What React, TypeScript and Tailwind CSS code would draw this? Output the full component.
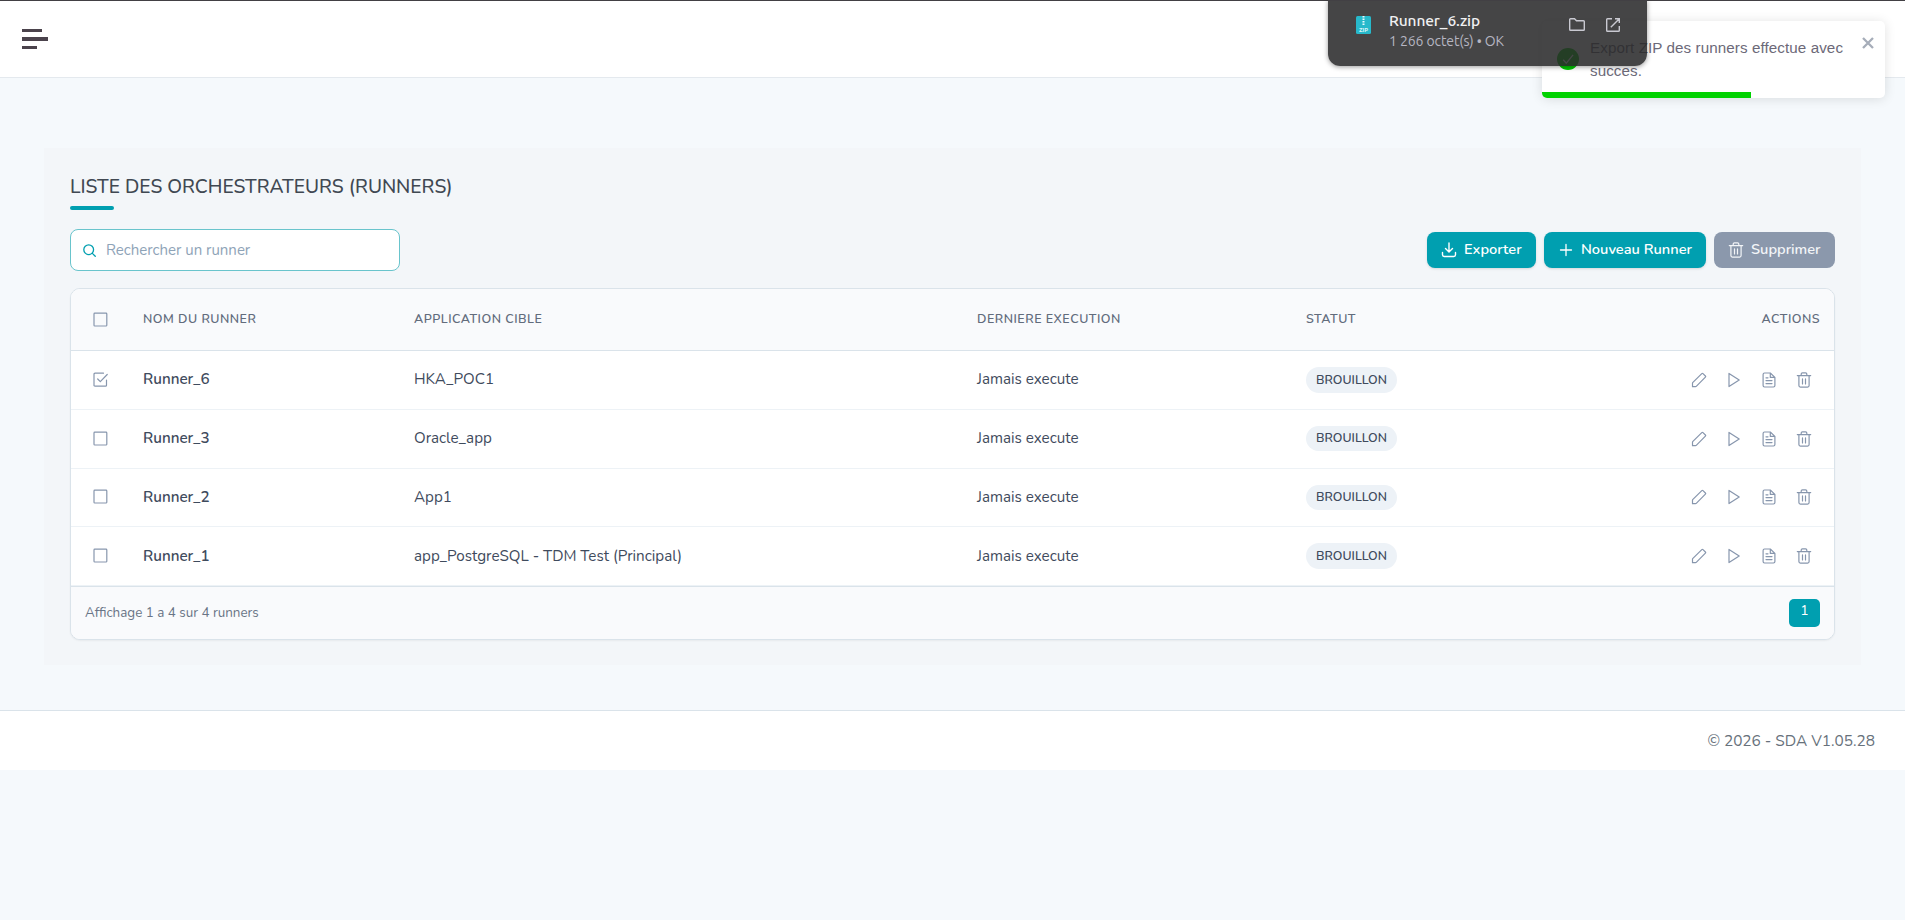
import clsx from "clsx";
import type { ReactNode } from "react";

const COLUMNS = "grid grid-cols-[72px_271px_563px_329px_1fr] items-center";

const runners = [
  { name: "Runner_6", app: "HKA_POC1", checked: true },
  { name: "Runner_3", app: "Oracle_app", checked: false },
  { name: "Runner_2", app: "App1", checked: false },
  { name: "Runner_1", app: "app_PostgreSQL - TDM Test (Principal)", checked: false },
];

function Icon({ children, className }: { children: ReactNode; className?: string }) {
  return (
    <svg
      viewBox="0 0 16 16"
      fill="none"
      stroke="currentColor"
      strokeWidth="1.2"
      strokeLinecap="round"
      strokeLinejoin="round"
      className={clsx("shrink-0", className ?? "size-4")}
    >
      {children}
    </svg>
  );
}

function TrashIcon() {
  return (
    <Icon>
      <path d="M1.3 3.6h13.4M5.2 3.4V2q0-1.2 1.2-1.2h3.2q1.2 0 1.2 1.2v1.4M2.9 3.8v9.8q0 1.5 1.5 1.5h7.2q1.5 0 1.5-1.5V3.8M6.5 6.9v5M9.5 6.9v5" />
    </Icon>
  );
}

function PencilIcon() {
  return (
    <Icon>
      <path d="M1.5 14.7v-3.4q0-.5.4-.9l8.9-8.8q.6-.6 1.2 0l2.4 2.4q.6.6 0 1.2l-8.9 8.9q-.5.6-1 .6Z" />
    </Icon>
  );
}

function PlayIcon() {
  return (
    <Icon>
      <path d="M3 1.4v13.2L13.2 8Z" />
    </Icon>
  );
}

function FileIcon() {
  return (
    <Icon>
      <path d="M9.3 1H3.5Q2.1 1 2.1 2.4v11.2Q2.1 15 3.5 15h9q1.4 0 1.4-1.4V5.4ZM9.3 1v4.4h4.6M5 5.8h2M5 8.6h6M5 11.6h6" />
    </Icon>
  );
}

function Checkbox({ checked }: { checked?: boolean }) {
  return (
    <Icon className="size-4 text-[#8796ad]">
      {checked ? (
        <path d="M14.5 8v5.2q0 1-1 1H3q-1 0-1-1v-11q0-1 1-1h8.5M5.7 7l2.6 2.7 6.9-7.2" />
      ) : (
        <rect x="2" y="1.2" width="12.8" height="12.8" rx="0.8" />
      )}
    </Icon>
  );
}

function Toast() {
  return (
    <div className="absolute top-[21px] right-5 h-[77px] w-[343px] overflow-hidden rounded-[5px] bg-white shadow-[0_1px_12px_rgba(0,0,0,0.12)]">
      <div className="flex pt-[15px] pl-[15px]">
        <svg viewBox="0 0 22 22" className="mt-3 size-[22px]">
          <circle cx="11" cy="11" r="11" fill="#00c800" />
          <path d="m6.2 11.7 3.1 3.5 6.8-8.3" fill="none" stroke="#fff" strokeWidth="1.3" />
        </svg>
        <p className="ml-[11px] w-[270px] font-['Liberation_Sans',sans-serif] text-[15.2px] leading-[23px] tracking-[0.08px] text-[#6c6978]">
          Export ZIP des runners effectue avec succes.
        </p>
      </div>
      <svg viewBox="0 0 12 12" className="absolute top-4 right-[11px] size-3">
        <path d="m1 1 10 10M11 1 1 11" stroke="#a6adb9" strokeWidth="2.3" />
      </svg>
      <div className="absolute bottom-0 left-0 h-1.5 w-[209px] bg-[#00d200]" />
    </div>
  );
}

function DownloadPopup() {
  return (
    <div className="absolute top-0 left-[1328px] flex h-[66px] w-[319px] rounded-b-xl border-t border-[#424044] bg-[rgba(41,41,43,0.87)] font-[Ubuntu,'Noto_Sans',sans-serif] shadow-[0_1px_5px_rgba(0,0,0,0.4)]">
      <svg viewBox="0 0 15 18" className="mt-[15px] ml-7 h-[18px] w-[15px]">
        <rect width="15" height="18" rx="1.5" fill="#27b9cb" />
        <path d="M7.5 0v9" stroke="#e8fbfd" strokeWidth="2" strokeDasharray="1.5 1" />
        <text x="7.5" y="15.5" textAnchor="middle" fontSize="6" fontWeight="700" fill="#d9f6fa">
          ZIP
        </text>
      </svg>
      <div className="mt-2.5 ml-[18px] w-[180px] whitespace-nowrap">
        <div className="text-[15.5px] leading-5 font-medium tracking-[-0.1px] text-[#f0f0f2]">Runner_6.zip</div>
        <div className="text-[14px] leading-5 tracking-[-0.1px] text-[#b6b6c2]">1 266 octet(s) • OK</div>
      </div>
      <svg viewBox="0 0 16 14" className="mt-[17px] h-[14px] w-4" fill="none" stroke="#c9c9d1" strokeWidth="1.4">
        <path d="M.7 11.5v-10q0-.8.8-.8h4l2 2h7q.8 0 .8.8v8q0 .8-.8.8h-13q-.8 0-.8-.8Z" />
      </svg>
      <svg viewBox="0 0 14 14" className="mt-[17px] ml-[21px] size-[14px]" fill="none" stroke="#c9c9d1" strokeWidth="1.4">
        <path d="M6 .7H1.5Q.7.7.7 1.5v11q0 .8.8.8h11q.8 0 .8-.8V8M9 .7h4.3V5M13.3.7 4.8 9.2" />
      </svg>
    </div>
  );
}

function Toolbar() {
  return (
    <div className="mt-[19px] flex h-[42px] items-center justify-between">
      <label className="flex h-[42px] w-[330px] items-center rounded-lg border border-[#69c4cc] bg-white pl-3">
        <Icon className="size-[13px] text-[#009fb0]">
          <circle cx="7" cy="7" r="6" strokeWidth="1.6" />
          <path d="m11.5 11.5 3.6 3.6" strokeWidth="1.6" />
        </Icon>
        <input
          placeholder="Rechercher un runner"
          className="ml-2.5 w-[280px] text-[15px] outline-none placeholder:text-[#8ea3b7]"
        />
      </label>
      <div className="flex gap-2 text-[14.6px] font-semibold text-white">
        <button className="flex h-9 w-[109px] items-center rounded-lg bg-[#009fb0] pl-3.5 shadow-sm">
          <Icon>
            <path d="M8 1v8.5M4.5 6.5 8 10l3.5-3.5M1.5 10.5v2.3q0 1.7 1.7 1.7h9.6q1.7 0 1.7-1.7v-2.3" strokeWidth="1.4" />
          </Icon>
          <span className="ml-[7px]">Exporter</span>
        </button>
        <button className="flex h-9 w-[162px] items-center rounded-lg bg-[#009fb0] pl-3.5 shadow-sm">
          <Icon>
            <path d="M8 2.5v11M2.5 8h11" strokeWidth="1.3" />
          </Icon>
          <span className="ml-[7px]">Nouveau Runner</span>
        </button>
        <button className="flex h-9 w-[121px] items-center rounded-lg bg-[#8b98ac] pl-3.5 text-[#f3f5f8]">
          <TrashIcon />
          <span className="ml-[7px]">Supprimer</span>
        </button>
      </div>
    </div>
  );
}

function RunnersTable() {
  return (
    <div className="mt-[17px] overflow-hidden rounded-[10px] border border-[#dae3ea] bg-white text-[#3f4b5d] shadow-xs">
      <div
        className={clsx(
          COLUMNS,
          "h-[62px] border-b border-[#dae3ea] bg-[#f9fafc] text-[12.5px] font-semibold tracking-[0.5px] text-[#626c7c]"
        )}
      >
        <div className="pl-[21px]">
          <Checkbox />
        </div>
        <div>NOM DU RUNNER</div>
        <div>APPLICATION CIBLE</div>
        <div>DERNIERE EXECUTION</div>
        <div className="flex justify-between pr-3.5">
          <span>STATUT</span>
          <span>ACTIONS</span>
        </div>
      </div>
      {runners.map((runner) => (
        <div key={runner.name} className={clsx(COLUMNS, "h-[58.75px] border-b border-[#edf2f6] text-[15.2px]")}>
          <div className="pl-[21px]">
            <Checkbox checked={runner.checked} />
          </div>
          <div className="font-semibold">{runner.name}</div>
          <div>{runner.app}</div>
          <div>Jamais execute</div>
          <div className="flex items-center justify-between pr-[22px]">
            <span className="flex h-[25.5px] w-[91px] items-center justify-center rounded-full bg-[#edf2f7] text-[12.4px] font-semibold">
              BROUILLON
            </span>
            <div className="flex gap-[19px] text-[#8796ad]">
              <PencilIcon />
              <PlayIcon />
              <FileIcon />
              <TrashIcon />
            </div>
          </div>
        </div>
      ))}
      <div className="flex h-[53px] items-center justify-between border-t border-[#dae3ea] bg-[#f9fafc] pr-3.5 pl-3.5">
        <span className="text-[13.4px] text-[#697586]">Affichage 1 a 4 sur 4 runners</span>
        <button className="h-7 w-[31px] rounded-[5px] bg-[#009fb0] pb-1 text-sm text-white">1</button>
      </div>
    </div>
  );
}

export default function App() {
  return (
    <div className="relative min-h-screen overflow-hidden bg-[#f5f9fc] font-[Nunito,Lato,sans-serif]">
      <header className="flex h-[78px] items-center border-t border-b border-t-[#424044] border-b-[#e4e9ee] bg-white pl-[22px]">
        <div className="flex flex-col gap-[5px] text-[#4b434c]">
          <span className="h-[3px] w-5 bg-current" />
          <span className="h-1 w-[26px] bg-current" />
          <span className="h-[3px] w-[15px] bg-current" />
        </div>
      </header>
      <main className="mx-11 mt-[70px] h-[517px] bg-[#f3f6f9] px-[26px] pt-[26px]">
        <h1 className="h-8 text-[19.2px] leading-[27px] font-medium text-[#404852]">
          LISTE DES ORCHESTRATEURS (RUNNERS)
        </h1>
        <div className="h-1 w-11 rounded-full bg-[#009fb0]" />
        <Toolbar />
        <RunnersTable />
      </main>
      <footer className="mt-[45px] flex h-[60px] items-center justify-end border-t border-[#dae3ea] bg-white pr-[30px] text-[15.4px] text-[#67717b]">
        © 2026 - SDA V1.05.28
      </footer>
      <Toast />
      <DownloadPopup />
    </div>
  );
}
